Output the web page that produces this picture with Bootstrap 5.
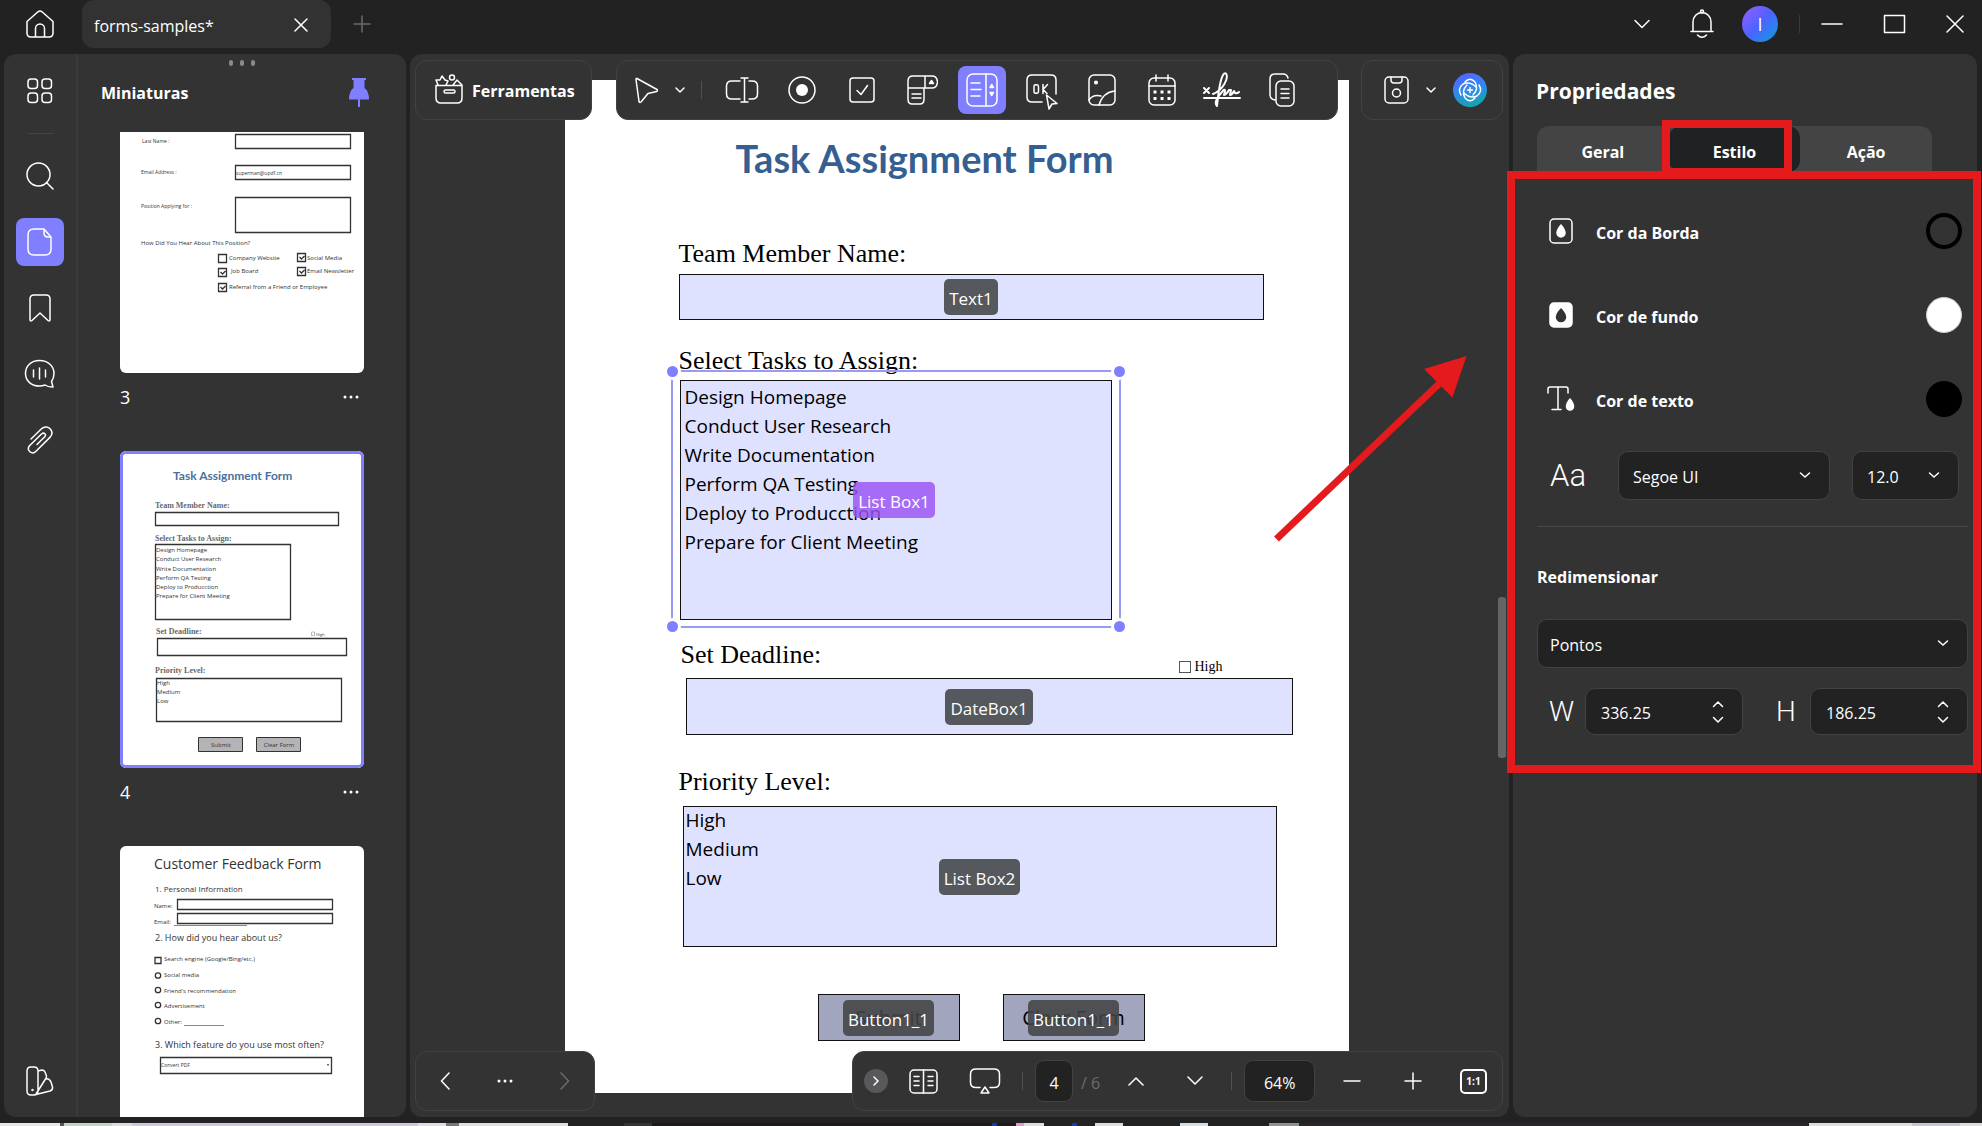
<!DOCTYPE html>
<html lang="pt" data-bs-theme="dark">
<head>
<meta charset="utf-8">
<meta name="viewport" content="width=device-width, initial-scale=1">
<title>forms-samples</title>
<link href="https://cdn.jsdelivr.net/npm/bootstrap@5.3.0/dist/css/bootstrap.min.css" rel="stylesheet">
<style>
:root{--ink:#222223;--panel:#333334;--edge:#424244;--accent:#7f7fff;--red:#e41a1c;--field:#dee2ff}
body{background:var(--ink);color:#fff;font-family:"Open Sans","Noto Sans",sans-serif;font-size:16px;height:100vh;overflow:hidden}
svg.ico{fill:none;stroke:currentColor;stroke-width:1.5;stroke-linecap:round;stroke-linejoin:round;flex:none;display:block}
.plain{background:none;border:0;padding:0;color:#fff;display:flex;align-items:center;justify-content:center;flex:none}
.s48{width:48px;height:48px;border-radius:8px}
.s48.on{background:var(--accent)}
.dim{color:#6b6b6e}
.vline{width:1px;height:18px;background:#515154;flex:none}
/* title bar */
.titlebar{height:54px;padding:0 18px 6px 26px}
.doctab{width:249px;height:48px;border-radius:12px;background:#323233;padding:2px 23px 0 12px;margin-left:28px}
.doctab a{color:#fff;text-decoration:none;padding-top:2px}
.tabadd{margin-left:22px}
.wctl{margin-left:40px}
.avatar{width:36px;height:36px;border-radius:50%;background:linear-gradient(135deg,#9a5cff,#4d63ff 50%,#0aa0d8);font-size:18px}
/* work area */
.work{padding:0 5px 0 4px;gap:4px;min-height:0}
.pane{background:var(--panel);border-radius:12px;min-height:0}
.rail{width:74px;border-right:2px solid #3a3a3b;padding:13px 0 12px;gap:18px}
.rail hr{width:27px;margin:0;border-color:#777}
.left{width:402px}
.thumbhead{height:78px;padding:0 36px 0 23px}
.grip{top:6px;left:151px;gap:7px}
.grip i{width:4px;height:6px;border-radius:2px;background:#8a8a8c}
.h-small{font-size:16px;font-weight:700;line-height:24px;margin:0}
.thumbs{padding:0 42px 0 42px;overflow:hidden}
.thumb svg.pg{display:block;width:100%;height:auto;background:#fff}
.thumb svg text{font-family:"Open Sans","Noto Sans",sans-serif;fill:#333}
.thumb svg .serif{font-family:"Liberation Serif",serif}
.thumb svg .ttl{font-family:Lato,sans-serif;font-weight:700;fill:#4a719d}
.thumb figcaption{height:78px;padding:9px 5px 0 0;font-size:18px;line-height:30px}
.bx{fill:none;stroke:#333;stroke-width:1.3}
/* document */
.center{overflow:hidden}
.sheetwrap{padding:26px 6px 24px 0}
.sheet{width:784px;background:#fff;color:#000;padding:56px 0 0 114px;min-height:0}
.sheet h1{font:700 38px/44px Lato,sans-serif;color:#365f91;margin:0 0 59px 57px}
.sheet .lbl{font:26px/30px "Liberation Serif",serif;display:block}
.fld{background:var(--field);border:1px solid #111;display:block;border-radius:0;outline:0;width:100%;height:100%;color:#000;padding:0}
.f-text{width:585px;height:46px;margin:5px 0 26px 0}
.f-list{width:432px;height:240px;margin:4px 0 20px 1px}
.f-date{width:607px;height:57px;margin:8px 0 32px 7px}
.f-prio{width:594px;height:141px;margin:9px 0 47px 4px}
.f-btn{width:142px;height:47px}
.rowhead{width:542px;margin-left:2px}
.tick{font:14px/18px "Liberation Serif",serif;margin-bottom:-6px}
.tick input{appearance:none;width:12px;height:12px;border:1px solid #555;margin:0}
select.fld{appearance:none;overflow:hidden;font-size:19px;padding:3px 4px;background-image:none}
.f-prio select.fld{padding:0 2px}
select.fld option{padding:0;height:29px;line-height:29px;color:#000;background:none}
.over{inset:0;display:flex;align-items:center;justify-content:center;pointer-events:none}
.tag{background:rgba(66,68,70,.88);color:#fff;border-radius:5px;height:36px;padding:4px 5px 0;font-size:17px;line-height:32px}
.tag.sel{background:rgba(154,82,244,.82);margin-left:-3px}
.btnf{background:#a1a5bd;text-align:center;font-size:20px}
.selbox{inset:-10px -9px -8px;pointer-events:none;border:2px solid #9a99f4}
.selbox i{position:absolute;width:17px;height:17px;border-radius:50%;background:var(--accent);border:3px solid #fff}
.dot-t{top:-9px}.dot-b{bottom:-9px}.dot-l{left:-9px}.dot-r{right:-9px}
.floatbar{height:60px;background:var(--panel);border:1px solid var(--edge);border-radius:12px;display:flex;align-items:center}
.top-bar{top:6px;left:5px;right:6px}
.bot-bar{bottom:6px;left:5px;right:6px}
.b-tools{width:177px;padding:2px 14px 0 18px;font-weight:700}
.b-fields{width:722px;padding-left:6px;margin-left:24px;gap:12px}
.b-save{width:142px;padding:0 15px 0 22px}
.b-nav{width:180px;padding:0 24px}
.b-page{width:651px;padding:0 15px 0 11px}
.g12{margin-left:12px}.g21{margin-left:21px}.g28{margin-left:28px}.g31{margin-left:31px}.g43{margin-left:43px}
.pill{background:var(--ink);border:1px solid var(--edge);border-radius:9px;color:#fff;height:42px;text-align:center;font-size:16px;padding:3px 0 0}
.thumbscroll{right:3px;top:543px;width:8px;height:161px;border-radius:3px;background:#656467}
.arrow{right:39px;top:296px;pointer-events:none}
/* properties */
.right{width:464px}
.right h2{font-size:21px;font-weight:700;line-height:30px;margin:0;padding:22px 0 20px 23px}
.segs{margin:0 45px 0 24px;height:46px;background:#444;border-radius:12px 12px 0 0}
.seg{width:33.33%}
.segs button{height:46px;font-weight:700;padding-top:6px}
.segs .on{background:#202123;border-radius:12px}
.mark-tab{inset:-6px 8px -4px -7px;border:8px solid var(--red)}
.mark-pane{inset:0 -4px 0 -6px;border:8px solid var(--red);pointer-events:none}
.stylepane{padding:18px 9px 38px 24px;margin-top:-1px}
.crow{height:84px;padding:0 6px 0 12px;gap:23px;font-weight:700}
.crow span{padding-top:3px}
.sw{width:36px;height:36px;border-radius:50%;border:1px solid #ccc}
.ctl{background-color:var(--ink);border:1px solid var(--edge);border-radius:10px;color:#fff;font-size:16px;height:49px;box-shadow:none}
select.ctl{appearance:none;padding:2px 36px 0 14px;background-image:url("data:image/svg+xml,%3Csvg xmlns='http://www.w3.org/2000/svg' viewBox='0 0 12 12'%3E%3Cpath d='M1.500 4l4.500 4 4.500-4' fill='none' stroke='%23fff' stroke-width='1.500' stroke-linecap='round'/%3E%3C/svg%3E");background-repeat:no-repeat;background-size:12px 12px;background-position:right 18px top 17px}
.big-l{font-family:Roboto,"Open Sans",sans-serif;font-weight:300;font-size:28px;line-height:36px}
.num{height:47px;padding-right:18px}
.num input{background:none;border:0;color:#fff;width:90px;font-size:16px;padding:2px 0 0 15px;outline:0}
.strip{height:6px;background:var(--ink);border-radius:0 0 12px 12px;flex:none}
.desk{height:3px;flex:none;background:linear-gradient(90deg,#e6e6e6 0 60px,#555 60px 64px,#c3d3ca 64px 112px,#dcdce0 112px 132px,#cdc8dd 132px 418px,#e0dde6 418px 446px,#777 446px 459px,#dfdfdf 459px 568px,#232323 568px 624px,#333 624px 652px,#1e1a1c 652px 992px,#0d3fa0 992px 997px,#1e1a1c 997px 1016px,#e29bc8 1016px 1024px,#ddd 1024px 1044px,#222 1044px 1072px,#0d3fa0 1072px 1077px,#222 1077px 1095px,#ddd 1095px 1123px,#222 1123px 1180px,#d5dfe3 1180px 1208px,#222 1208px 1269px,#909090 1269px 1299px,#2a2428 1299px 1809px,#ddd 1809px 1912px,#c8c5d5 1912px 1960px,#ddd 1960px)}
</style>
</head>
<body class="d-flex flex-column m-0">

<header class="titlebar d-flex align-items-center flex-shrink-0">
  <button class="plain" aria-label="Início"><svg class="ico" width="28" height="28" viewBox="0 0 28 28"><path d="M1 11.500 12 1.800q2-1.500 4 0L27 11.500V23q0 4-4 4H5q-4 0-4-4zM9.500 27V18.500a4.500 4.500 0 0 1 9 0V27"/></svg></button>
  <div class="doctab d-flex align-items-center justify-content-between">
    <a href="#">forms-samples*</a>
    <button class="plain" aria-label="Fechar aba"><svg class="ico" width="14" height="14" viewBox="0 0 14 14"><path d="M1 1l12 12M13 1 1 13"/></svg></button>
  </div>
  <button class="plain dim tabadd" aria-label="Nova aba"><svg class="ico" width="18" height="18" viewBox="0 0 18 18"><path d="M9 1v16M1 9h16"/></svg></button>
  <div class="d-flex align-items-center ms-auto">
    <button class="plain" aria-label="Mais"><svg class="ico" width="16" height="10" viewBox="0 0 16 10"><path d="M1 1.500l7 7 7-7"/></svg></button>
    <button class="plain wctl" aria-label="Notificações"><svg class="ico" width="24" height="30" viewBox="0 0 24 30"><path d="M1 22.500h22M3 22.500V13a9 9.500 0 0 1 18 0v9.500M7.500 26q4.500 4.500 9 0"/><circle cx="12" cy="2.500" r="1.500"/></svg></button>
    <button class="plain avatar g28">I</button>
    <span class="vline opacity-50 g21"></span>
    <button class="plain g21" aria-label="Minimizar"><svg class="ico" width="22" height="22" viewBox="0 0 22 22"><path d="M1 11h20"/></svg></button>
    <button class="plain wctl" aria-label="Maximizar"><svg class="ico" width="23" height="20" viewBox="0 0 23 20"><path d="M1.500 1.500h20v17h-20z"/></svg></button>
    <button class="plain wctl" aria-label="Fechar"><svg class="ico" width="18" height="18" viewBox="0 0 18 18"><path d="M1 1l16 16M17 1 1 17"/></svg></button>
  </div>
</header>

<main class="work d-flex flex-grow-1">

  <aside class="pane left d-flex flex-shrink-0 overflow-hidden">
    <nav class="rail d-flex flex-column align-items-center flex-shrink-0">
      <button class="plain s48" aria-label="Painel"><svg class="ico" width="26" height="26" viewBox="0 0 26 26"><rect x="1" y="1" width="9.500" height="9.500" rx="3"/><rect x="15" y="1" width="9.500" height="9.500" rx="3"/><rect x="1" y="15" width="9.500" height="9.500" rx="3"/><rect x="15" y="15" width="9.500" height="9.500" rx="3"/></svg></button>
      <hr>
      <button class="plain s48" aria-label="Pesquisar"><svg class="ico" width="28" height="28" viewBox="0 0 28 28"><circle cx="12.500" cy="12.500" r="11.500"/><path d="M20.500 20.500l6.500 6.500"/></svg></button>
      <button class="plain s48 on" aria-label="Miniaturas"><svg class="ico" width="26" height="28" viewBox="0 0 26 28"><path d="M17 1H7Q1 1 1 7v14q0 6 6 6h11q6 0 6-6V9zM17 1v4q0 4 4 4h3"/></svg></button>
      <button class="plain s48" aria-label="Marcadores"><svg class="ico" width="24" height="28" viewBox="0 0 24 28"><path d="M2 26V5q0-4 4-4h12q4 0 4 4v21q-.5 1.500-2 .5l-8-7.500-8 7.500Q2.500 27.500 2 26z"/></svg></button>
      <button class="plain s48" aria-label="Comentários"><svg class="ico" width="32" height="30" viewBox="0 0 32 30"><path d="M15.500 1.500C7 1.500 1.500 7 1.500 14.500S7.500 27 15.500 27q3 0 5.500-1 3 2.200 8 2l-1.500-5.500q2.500-3.500 2.500-8C30 7 24 1.500 15.500 1.500zM9.500 11v7M15.500 9v11M21.500 11v7"/></svg></button>
      <button class="plain s48" aria-label="Anexos"><svg class="ico" width="26" height="28" viewBox="0 0 26 28"><path d="M4 13 14.500 2.800c3-2.800 7-2 9 .4 2 2.600 1.800 5.800-.6 8.200L9 25.300c-4 4-10-1-6.500-5.600L14.500 8c2.600-2.200 5.400.6 3 3l-7.500 7.500"/></svg></button>
      <button class="plain s48 mt-auto" aria-label="Temas"><svg class="ico" width="28" height="30" viewBox="0 0 28 30"><path d="M5 1h3q4 0 4 4v20q0 4-4 4H5q-4 0-4-4V5q0-4 4-4zM12 5l4-1q2 0 3 2l1.500 4q0 2-1 3L10 28M20 13q3-1 5 3l1.500 5q.5 3-2.500 4L8 29"/><circle cx="6.500" cy="24" r=".5"/></svg></button>
    </nav>
    <section class="flex-grow-1 d-flex flex-column position-relative overflow-hidden">
      <div class="grip position-absolute d-flex"><i></i><i></i><i></i></div>
      <div class="thumbhead d-flex align-items-center justify-content-between flex-shrink-0">
        <h2 class="h-small">Miniaturas</h2>
        <button class="plain" aria-label="Fixar painel"><svg width="22" height="30" viewBox="0 0 22 30" fill="#7f7fff"><path d="M4 0h14v2h-1.500v8q4.500 3 4.500 11.500H1Q1 13 5.500 10V2H4zM10 21h2v8h-2z"/></svg></button>
      </div>
      <div class="thumbs flex-grow-1">
        <figure class="thumb m-0">
          <svg class="pg rounded-bottom" viewBox="0 0 244 241">
            <g font-size="5"><text x="22" y="11">Last Name  :</text><text x="21" y="42">Email Address  :</text><text x="21" y="76">Position Applying for :</text><text x="116" y="43">superman@updf.cn</text></g>
            <text x="21" y="113" font-size="6">How Did You Hear About This Position?</text>
            <path class="bx" d="M115.500 2.500h115v14h-115zM115.500 33.500h115v14h-115zM115.500 65.500h115v35h-115zM98.500 122.500h8v8h-8zM98.500 136.500h8v8h-8zM98.500 151.500h8v8h-8zM177.500 121.500h8v8h-8zM177.500 135.500h8v8h-8zM100.500 140l2 2 3-3M100.500 155l2 2 3-3M179.500 125l2 2 3-3M179.500 139l2 2 3-3"/>
            <g font-size="6"><text x="109" y="128">Company Website</text><text x="111" y="141">Job Board</text><text x="109" y="157">Referral from a Friend or Employee</text><text x="187" y="128">Social Media</text><text x="187" y="141">Email Newsletter</text></g>
          </svg>
          <figcaption class="d-flex justify-content-between"><span>3</span><svg width="16" height="30" fill="#fff"><circle cx="2" cy="15" r="1.500"/><circle cx="8" cy="15" r="1.500"/><circle cx="14" cy="15" r="1.500"/></svg></figcaption>
        </figure>
        <figure class="thumb m-0">
          <svg class="pg rounded" viewBox="0 0 244 317">
            <text x="53" y="29" font-size="12" class="ttl">Task Assignment Form</text>
            <g font-size="8" font-weight="700" opacity=".75"><text x="35" y="57" class="serif">Team Member Name:</text><text x="35" y="90" class="serif">Select Tasks to Assign:</text><text x="36" y="183" class="serif">Set Deadline:</text><text x="35" y="222" class="serif">Priority Level:</text></g>
            <path class="bx" d="M35.500 61.500h183v13h-183zM35.500 93.500h135v75h-135zM37.500 187.500h189v17h-189zM36.500 227.500h185v43h-185z"/>
            <path fill="none" stroke="#777" stroke-width=".5" d="M191.500 181h3v3.500h-3z"/>
            <g font-size="6"><text x="36" y="101">Design Homepage</text><text x="36" y="110">Conduct User Research</text><text x="36" y="120">Write Documentation</text><text x="36" y="129">Perform QA Testing</text><text x="36" y="138">Deploy to Producction</text><text x="36" y="147">Prepare for Client Meeting</text><text x="37" y="234">High</text><text x="37" y="243">Medium</text><text x="37" y="252">Low</text></g>
            <text x="196" y="185" font-size="4">High</text>
            <path d="M78.500 286.500h44v14h-44zM136.500 286.500h44v14h-44z" fill="#b5b3b6" stroke="#333"/>
            <g font-size="6" text-anchor="middle"><text x="101" y="296">Submit</text><text x="159" y="296">Clear Form</text></g>
            <rect x="1.500" y="1.500" width="241" height="314" rx="4" fill="none" stroke="#7f7fff" stroke-width="3"/>
          </svg>
          <figcaption class="d-flex justify-content-between"><span>4</span><svg width="16" height="30" fill="#fff"><circle cx="2" cy="15" r="1.500"/><circle cx="8" cy="15" r="1.500"/><circle cx="14" cy="15" r="1.500"/></svg></figcaption>
        </figure>
        <figure class="thumb m-0">
          <svg class="pg rounded" viewBox="0 0 244 317">
            <text x="34" y="23" font-size="14">Customer Feedback Form</text>
            <text x="35" y="46" font-size="8">1. Personal Information</text>
            <text x="35" y="95" font-size="9">2. How did you hear about us?</text>
            <text x="35" y="202" font-size="9">3. Which feature do you use most often?</text>
            <g font-size="6"><text x="34" y="62">Name:</text><text x="34" y="78">Email:</text><text x="44" y="115">Search engine (Google/Bing/etc.)</text><text x="44" y="131">Social media</text><text x="44" y="147">Friend's recommendation</text><text x="44" y="162">Advertisement</text><text x="44" y="178">Other:</text></g>
            <path class="bx" d="M57.500 53.500h155v10h-155zM57.500 67.500h155v10h-155zM35 111.500h6v6h-6zM40.500 211.500h171v16h-171z"/>
            <path d="M54 79.500h73M64 179.500h40" stroke="#888"/>
            <g class="bx"><circle cx="38" cy="129.500" r="2.700"/><circle cx="38" cy="144" r="2.700"/><circle cx="38" cy="159" r="2.700"/><circle cx="38" cy="175" r="2.700"/></g>
            <text x="41" y="221" font-size="5">Convert PDF</text><path d="M207 218h2l-1 2z" fill="#333"/>
          </svg>
        </figure>
      </div>
    </section>
  </aside>

  <section class="pane center flex-grow-1 position-relative d-flex">
    <div class="sheetwrap flex-grow-1 d-flex justify-content-center">
      <form class="sheet">
        <h1>Task Assignment Form</h1>
        <label class="lbl" for="f1">Team Member Name:</label>
        <div class="position-relative f-text"><input id="f1" class="fld"><div class="over position-absolute"><span class="tag">Text1</span></div></div>

        <label class="lbl" for="f2">Select Tasks to Assign:</label>
        <div class="position-relative f-list">
          <select id="f2" class="fld" multiple size="8"><option>Design Homepage</option><option>Conduct User Research</option><option>Write Documentation</option><option>Perform QA Testing</option><option>Deploy to Producction</option><option>Prepare for Client Meeting</option></select>
          <div class="over position-absolute"><span class="tag sel">List Box1</span></div>
          <div class="selbox position-absolute"><i class="dot-t dot-l"></i><i class="dot-t dot-r"></i><i class="dot-b dot-l"></i><i class="dot-b dot-r"></i></div>
        </div>

        <div class="rowhead d-flex align-items-end justify-content-between">
          <label class="lbl" for="f3">Set Deadline:</label>
          <label class="tick d-flex align-items-center gap-1"><input type="checkbox">High</label>
        </div>
        <div class="position-relative f-date"><input id="f3" class="fld"><div class="over position-absolute"><span class="tag">DateBox1</span></div></div>

        <label class="lbl" for="f4">Priority Level:</label>
        <div class="position-relative f-prio">
          <select id="f4" class="fld" multiple size="4"><option>High</option><option>Medium</option><option>Low</option></select>
          <div class="over position-absolute"><span class="tag">List Box2</span></div>
        </div>

        <div class="d-flex" style="margin-left:139px;gap:43px">
          <div class="position-relative f-btn"><button type="button" class="fld btnf">Submit</button><div class="over position-absolute"><span class="tag">Button1_1</span></div></div>
          <div class="position-relative f-btn"><button type="button" class="fld btnf">Clear Form</button><div class="over position-absolute"><span class="tag">Button1_1</span></div></div>
        </div>
      </form>
    </div>

    <div class="top-bar position-absolute d-flex align-items-start">
      <button class="floatbar b-tools text-white gap-2"><svg class="ico mb-1" width="30" height="30" viewBox="0 0 30 30"><path d="M2 11.500h26M2 11.500V24q0 5 5 5h16q5 0 5-5V11.500M4 11l-2-5 4 0 2-4 3 4 3 1-2 4M19 11l4-5 5 5"/><circle cx="18" cy="3.500" r="2.500"/><rect x="10" y="16" width="11" height="3" rx="1.500"/></svg><span>Ferramentas</span></button>
      <div class="floatbar b-fields">
        <div class="d-flex align-items-center me-1">
          <button class="plain s48" aria-label="Selecionar"><svg class="ico" width="24" height="28" viewBox="0 0 24 28"><path d="M2 2.500 22 13.500q1 1.500-.5 2l-8.500 2L6 26q-1.500 1-2-.5L1 3.500Q1 2 2 2.500z"/></svg></button>
          <button class="plain" style="width:18px" aria-label="Opções"><svg class="ico" width="10" height="7" viewBox="0 0 10 7"><path d="M1 1l4 4 4-4"/></svg></button>
          <span class="vline g12"></span>
        </div>
        <button class="plain s48" aria-label="Campo de texto"><svg class="ico" width="34" height="26" viewBox="0 0 34 26"><path d="M15 4H7Q1.500 4 1.500 9v8q0 5 5.500 5h8M24 4h3q5.500 0 5.500 5v8q0 5-5.500 5h-3M16 1h7M16 25h7M19.500 1v24"/></svg></button>
        <button class="plain s48" aria-label="Botão de opção"><svg class="ico" width="28" height="28" viewBox="0 0 28 28"><circle cx="14" cy="14" r="13"/><circle cx="14" cy="14" r="6" fill="#fff" stroke="none"/></svg></button>
        <button class="plain s48" aria-label="Caixa de seleção"><svg class="ico" width="26" height="26" viewBox="0 0 26 26"><rect x="1" y="1" width="24" height="24" rx="3"/><path d="M8 13.500l4 4 6.500-9"/></svg></button>
        <button class="plain s48" aria-label="Lista suspensa"><svg class="ico" width="32" height="30" viewBox="0 0 32 30"><path d="M18 13v11q0 5-4 5H6q-4 0-4-5V6q0-5 5-5h19q5 0 5.500 6-.5 6-5.500 6H2M19 1v12M6 19h9M6 23h9"/><path d="M23.500 8.500h4l-2-3z" fill="#fff"/></svg></button>
        <button class="plain s48 on" aria-label="Caixa de listagem"><svg class="ico" width="32" height="34" viewBox="0 0 32 34"><rect x="1" y="1" width="30" height="32" rx="6"/><path d="M20 1v32M5 10h9M5 16.500h10M5 23h9"/><path d="M24 14.500h3.500l-1.700-3zM24 19.500h3.500l-1.700 3z" fill="#fff"/></svg></button>
        <button class="plain s48" aria-label="Botão"><svg class="ico mt-1" width="32" height="36" viewBox="0 0 32 36"><path d="M16 28H6q-5 0-5-5V6q0-5 5-5h19q5 0 5 5v14"/><path d="M20.500 21 31 29.500l-5 .5-3 5z"/><path d="M10 11q2.500-1 2.500 2v4q0 3-2.500 2-2 1-2-2v-4q0-3 2-2zM17 10.500v9M21.500 10.500 17 15.500l4 4"/></svg></button>
        <button class="plain s48" aria-label="Imagem"><svg class="ico" width="28" height="32" viewBox="0 0 28 32"><rect x="1" y="1" width="26" height="30" rx="5"/><path d="M27 17q-12 1-16 14M1 26q4-6 12-4"/><circle cx="8" cy="8.500" r="1.300" fill="#fff"/></svg></button>
        <button class="plain s48" aria-label="Data"><svg class="ico" width="28" height="32" viewBox="0 0 28 32"><rect x="1" y="4" width="26" height="27" rx="5"/><path d="M1 12h26M8 1v6M20 1v6"/><path d="M5.500 18h3M12.500 18h3M19.500 18h3M5.500 24.500h3M12.500 24.500h3M19.500 24.500h3" stroke-width="3" stroke-linecap="butt"/></svg></button>
        <button class="plain s48" aria-label="Assinatura"><svg class="ico" width="38" height="36" viewBox="0 0 38 36"><path d="M1 16l5 5M6 16l-5 5M1 26h36" stroke-width="2"/><path stroke-width="2" d="M10 22C20 18 26 6 23 1.500 19-1 16 14 14 34q-4-4 5-14 3-4 3-1l-1 4q3-1 5-5l2 0-1 5q2 0 4-4l1 2q2 1 4-1"/></svg></button>
        <button class="plain s48" aria-label="Duplicar"><svg class="ico" width="26" height="34" viewBox="0 0 26 34"><path d="M6 27q-5-1-5-5V6q0-5 5-5h8q4 0 5 4"/><rect x="7" y="8" width="18" height="25" rx="5"/><path d="M12 16h8M12 20.500h8M12 25h8"/></svg></button>
      </div>
      <div class="floatbar b-save ms-auto justify-content-between">
        <button class="plain" aria-label="Salvar"><svg class="ico" width="25" height="28" viewBox="0 0 25 28"><rect x="1" y="1" width="23" height="26" rx="4"/><path d="M7 1v3q0 3 3 3h5q3 0 3-3V1"/><circle cx="12.500" cy="17" r="4"/></svg></button>
        <button class="plain" aria-label="Opções de salvar"><svg class="ico" width="10" height="7" viewBox="0 0 10 7"><path d="M1 1l4 4 4-4"/></svg></button>
        <button class="plain" aria-label="Assistente"><svg class="ico" width="34" height="34" viewBox="0 0 34 34"><defs><linearGradient id="ai" x1="0" y1="0" x2=".3" y2="1"><stop offset="0" stop-color="#5a5cff"/><stop offset=".55" stop-color="#3288f0"/><stop offset="1" stop-color="#16a2b4"/></linearGradient></defs><circle cx="17" cy="17" r="17" fill="url(#ai)" stroke="none"/><path d="M12 9q5-5.500 10 0 4 7-2 13M22 25q-5 5.500-10 0-4-7 2-13M8 22q-4-6 2-11 7-3 13 3M26 12q4 6-2 11-7 3-13-3"/><path d="M17 14.500v5M14.500 17h5"/></svg></button>
      </div>
    </div>

    <div class="bot-bar position-absolute d-flex justify-content-between">
      <div class="floatbar b-nav justify-content-between">
        <button class="plain" aria-label="Voltar"><svg class="ico" width="10" height="18" viewBox="0 0 10 18"><path d="M9 1 1.500 9 9 17"/></svg></button>
        <button class="plain" aria-label="Mais"><svg width="16" height="4" fill="#fff"><circle cx="2" cy="2" r="1.500"/><circle cx="8" cy="2" r="1.500"/><circle cx="14" cy="2" r="1.500"/></svg></button>
        <button class="plain dim" aria-label="Avançar"><svg class="ico" width="10" height="18" viewBox="0 0 10 18"><path d="M1 1l7.500 8L1 17"/></svg></button>
      </div>
      <div class="floatbar b-page">
        <button class="plain rounded-circle" style="width:24px;height:24px;background:#59595b" aria-label="Recolher"><svg class="ico" width="6" height="10" viewBox="0 0 6 10"><path d="M1 1l4 4-4 4"/></svg></button>
        <button class="plain g21" aria-label="Visualização"><svg class="ico" width="29" height="25" viewBox="0 0 29 25"><rect x="1" y="1" width="27" height="23" rx="4"/><path d="M14.500 1v23M5 7.500h5M5 12h5M5 16.500h5M19 7.500h5M19 12h5M19 16.500h5"/></svg></button>
        <button class="plain g31" aria-label="Apresentação"><svg class="ico" width="32" height="26" viewBox="0 0 32 26"><path d="M11 19.500H7q-5.500 0-5.500-5V6Q1.500 1 7 1h18q5.500 0 5.500 5v8.500q0 5-5.500 5h-4M16 19l4 6h-8z"/></svg></button>
        <span class="vline g21"></span>
        <input class="pill g12" style="width:38px" value="4" aria-label="Página">
        <span class="dim ms-2 pt-1">/ 6</span>
        <button class="plain g28" aria-label="Página anterior"><svg class="ico" width="16" height="10" viewBox="0 0 16 10"><path d="M1 9l7-7 7 7"/></svg></button>
        <button class="plain g43" aria-label="Próxima página"><svg class="ico" width="16" height="10" viewBox="0 0 16 10"><path d="M1 1l7 7 7-7"/></svg></button>
        <span class="vline g28"></span>
        <input class="pill g12" style="width:71px" value="64%" aria-label="Zoom">
        <button class="plain g28" aria-label="Diminuir"><svg class="ico" width="18" height="18" viewBox="0 0 18 18"><path d="M1 9h16"/></svg></button>
        <button class="plain g43" aria-label="Aumentar"><svg class="ico" width="18" height="18" viewBox="0 0 18 18"><path d="M9 1v16M1 9h16"/></svg></button>
        <button class="plain ms-auto" style="width:27px;height:25px;border:2px solid #fff;border-radius:5px;font-size:10px;font-weight:700">1:1</button>
      </div>
    </div>
    <div class="thumbscroll position-absolute"></div>
    <svg class="arrow position-absolute" width="200" height="200" viewBox="0 0 200 200"><path d="M6.500 189 172 31" stroke="#e41a1c" stroke-width="7"/><path d="M196.500 6 154 19l28.500 28.500z" fill="#e41a1c"/></svg>
  </section>

  <aside class="pane right flex-shrink-0">
    <h2>Propriedades</h2>
    <div class="segs d-flex">
      <button class="plain seg">Geral</button>
      <div class="position-relative seg"><button class="plain on w-100">Estilo</button><div class="mark-tab position-absolute"></div></div>
      <button class="plain seg">Ação</button>
    </div>
    <section class="stylepane position-relative">
      <div class="mark-pane position-absolute"></div>
      <div class="crow d-flex align-items-center"><svg class="ico" width="24" height="26" viewBox="0 0 24 26"><rect x="1" y="1" width="22" height="24" rx="4"/><path d="M12 7q-4 5-4 8a4 4 0 0 0 8 0q0-3-4-8z" fill="#fff"/></svg><span>Cor da Borda</span><button class="sw ms-auto" style="background:none;border:4px solid #000" aria-label="Cor da Borda"></button></div>
      <div class="crow d-flex align-items-center"><svg class="ico" width="24" height="26" viewBox="0 0 24 26"><rect x="1" y="1" width="22" height="24" rx="4" fill="#fff"/><path d="M12 7q-4.500 5-4.500 8a4.500 4.500 0 0 0 9 0q0-3-4.500-8z" fill="#333" stroke="#333"/></svg><span>Cor de fundo</span><button class="sw ms-auto" style="background:#fff" aria-label="Cor de fundo"></button></div>
      <div class="crow d-flex align-items-center"><svg class="ico" width="24" height="26" viewBox="2 0 24 26" overflow="visible"><path d="M1 7V3q0-2 2-2h16q2 0 2 2v4M11 1v22M5 23.500h9"/><path d="M23 13q-3.500 4.500-3.500 7.500a3.500 3.500 0 0 0 7 0q0-3-3.500-7.500z" fill="#fff"/></svg><span>Cor de texto</span><button class="sw ms-auto" style="background:#000;border-color:#000" aria-label="Cor de texto"></button></div>
      <div class="d-flex align-items-center" style="padding:10px 9px 26px 13px">
        <label class="big-l" for="ff" style="font-size:31px;width:68px">Aa</label>
        <select id="ff" class="ctl flex-grow-1"><option>Segoe UI</option></select>
        <select class="ctl" style="width:107px;margin-left:22px" aria-label="Tamanho"><option>12.0</option></select>
      </div>
      <hr class="m-0" style="border-color:#888">
      <h3 class="h-small" style="padding:38px 0 30px">Redimensionar</h3>
      <select class="ctl w-100" style="padding-left:12px" aria-label="Unidade"><option>Pontos</option></select>
      <div class="d-flex align-items-center" style="padding:20px 0 0 12px">
        <label class="big-l" for="w" style="width:36px">W</label>
        <div class="num ctl d-flex align-items-center justify-content-between flex-fill"><input id="w" value="336.25"><span class="d-flex flex-column gap-2"><button class="plain" aria-label="Mais"><svg class="ico" width="12" height="8" viewBox="0 0 12 8"><path d="M1.500 6.500 6 2l4.500 4.500"/></svg></button><button class="plain" aria-label="Menos"><svg class="ico" width="12" height="8" viewBox="0 0 12 8"><path d="M1.500 1.500 6 6l4.500-4.500"/></svg></button></span></div>
        <label class="big-l" for="h" style="width:34px;margin-left:33px">H</label>
        <div class="num ctl d-flex align-items-center justify-content-between flex-fill"><input id="h" value="186.25"><span class="d-flex flex-column gap-2"><button class="plain" aria-label="Mais"><svg class="ico" width="12" height="8" viewBox="0 0 12 8"><path d="M1.500 6.500 6 2l4.500 4.500"/></svg></button><button class="plain" aria-label="Menos"><svg class="ico" width="12" height="8" viewBox="0 0 12 8"><path d="M1.500 1.500 6 6l4.500-4.500"/></svg></button></span></div>
      </div>
    </section>
  </aside>
</main>
<div class="strip"></div>
<div class="desk"></div>
<script src="https://cdn.jsdelivr.net/npm/bootstrap@5.3.0/dist/js/bootstrap.bundle.min.js"></script>
</body>
</html>
